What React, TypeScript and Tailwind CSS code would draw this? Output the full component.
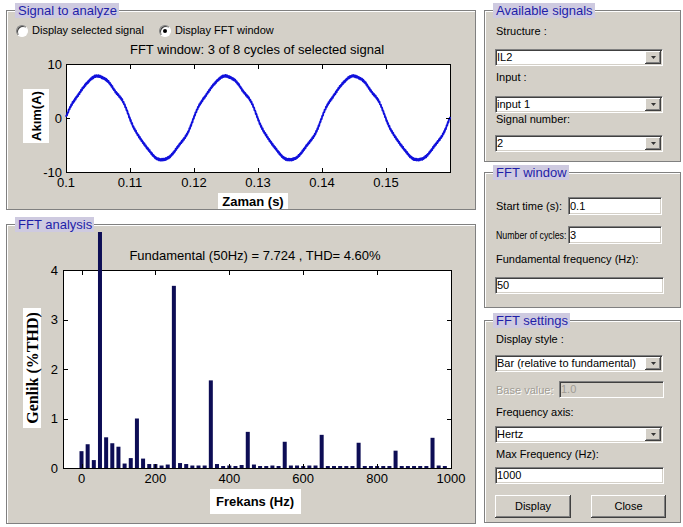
import React from 'react';

// Classic Windows / MATLAB GUI look: gray face, etched panels, sunken edit fields.
const SUNKEN =
  'border border-[#808080] border-b-white border-r-white shadow-[inset_1px_1px_0_#404040,inset_-1px_-1px_0_#d4d0c8]';
const RAISED = 'bg-[#d4d0c8] shadow-[inset_-1px_-1px_0_#404040,inset_1px_1px_0_#fff,inset_-2px_-2px_0_#808080]';

function Panel({ title, className, children }: { title: string; className: string; children?: React.ReactNode }) {
  return (
    <div className={`relative flex flex-col border border-[#808080] bg-[#d4d0c8] shadow-[inset_1px_1px_0_#fff] ${className}`}>
      <span className="absolute left-[8px] top-[-8px] z-10 h-[15px] bg-[#cecae0] pl-[3px] pr-[2px] text-[13px] leading-[15px] text-[#1e1ea8]">
        {title}
      </span>
      {children}
    </div>
  );
}

function Label({ children, className = '', disabled }: { children: React.ReactNode; className?: string; disabled?: boolean }) {
  return (
    <div
      className={`h-[12px] whitespace-nowrap leading-[12px] ${
        disabled ? 'text-[#a09c94] [text-shadow:1px_1px_0_#fff]' : ''
      } ${className}`}
    >
      {children}
    </div>
  );
}

function Combo({ value, className = '' }: { value: string; className?: string }) {
  return (
    <div className={`flex h-[17px] w-[168px] items-center bg-white ${SUNKEN} ${className}`}>
      <span className="flex-1 truncate pl-[1px] leading-[13px]">{value}</span>
      <span className={`mr-[1px] flex h-[13px] w-[16px] items-center justify-center ${RAISED}`}>
        <svg width="5" height="3" viewBox="0 0 5 3" aria-hidden="true">
          <path d="M0 0h5L2.5 3z" fill="#333" />
        </svg>
      </span>
    </div>
  );
}

function Edit({ value, className = '', disabled }: { value: string; className?: string; disabled?: boolean }) {
  return (
    <div
      className={`flex items-center ${SUNKEN} ${
        disabled ? 'bg-[#d4d0c8] text-[#a09c94]' : 'bg-white'
      } ${className}`}
    >
      <span className="pl-[1px] leading-[13px]">{value}</span>
    </div>
  );
}

function Radio({ checked, label, className = '' }: { checked?: boolean; label: string; className?: string }) {
  return (
    <div className={`flex items-center gap-[4px] ${className}`}>
      <span className="flex h-[12px] w-[12px] items-center justify-center rounded-full border border-[#808080] border-b-white border-r-white bg-white shadow-[inset_1px_1px_0_#404040]">
        {checked && <span className="h-[4px] w-[4px] rounded-full bg-black" />}
      </span>
      <span className="leading-[13px]">{label}</span>
    </div>
  );
}

/* ---------- signal plot ---------- */

const sigX = (t: number) => 66 + ((t - 0.1) / 0.06) * 384;
const sigY = (v: number) => 118 - v * 5.4;

const signalPath = (() => {
  const pts: string[] = [];
  const N = 1400;
  for (let i = 0; i <= N; i++) {
    const t = (i / N) * 0.06;
    const w = 2 * Math.PI * 50 * t;
    let v =
      7.7 * Math.sin(w) +
      0.08 * Math.sin(3 * w + 0.4) +
      0.22 * Math.sin(5 * w + 0.2) +
      0.12 * Math.sin(7 * w + 0.3) +
      0.06 * Math.sin(9 * w + 1.2);
    // switching ripple makes the trace look thick
    v += 0.14 * Math.sin(2 * Math.PI * 5150 * t) + 0.07 * Math.sin(2 * Math.PI * 9800 * t + 1);
    pts.push(`${i ? 'L' : 'M'}${sigX(0.1 + t).toFixed(2)} ${sigY(v).toFixed(2)}`);
  }
  return pts.join('');
})();

function SignalPlot() {
  const xt = [0.1, 0.11, 0.12, 0.13, 0.14, 0.15];
  return (
    <svg width="468" height="172" viewBox="7 37 468 172" className="block" fontSize={13}>
      <text x="257" y="54" textAnchor="middle">
        FFT window: 3 of 8 cycles of selected signal
      </text>
      <rect x="66.5" y="64.5" width="384" height="108" fill="#fff" stroke="#000" />
      <path d={signalPath} fill="none" stroke="#1010dc" strokeWidth="1.9" strokeLinejoin="round" />
      {[...xt, 0.16].map((t) => {
        const x = Math.round(sigX(t)) + 0.5;
        return (
          <g key={t} stroke="#000">
            <line x1={x} x2={x} y1={172} y2={168} />
            <line x1={x} x2={x} y1={65} y2={69} />
          </g>
        );
      })}
      {[-10, 0, 10].map((v) => (
        <g key={v} stroke="#000">
          <line x1={66} x2={70} y1={sigY(v) + 0.5} y2={sigY(v) + 0.5} />
          <line x1={446} x2={450} y1={sigY(v) + 0.5} y2={sigY(v) + 0.5} />
        </g>
      ))}
      {xt.map((t) => (
        <text key={t} x={sigX(t)} y="187" textAnchor="middle">
          {t}
        </text>
      ))}
      <text x="62" y="69" textAnchor="end">10</text>
      <text x="62" y="123" textAnchor="end">0</text>
      <text x="62" y="177" textAnchor="end">-10</text>
      <rect x="218" y="193" width="70" height="16" fill="#fff" />
      <text x="253" y="206" textAnchor="middle" fontWeight="bold">
        Zaman (s)
      </text>
      <rect x="23" y="89" width="26" height="54" fill="#fff" />
      <text transform="translate(41 116) rotate(-90)" textAnchor="middle" fontWeight="bold">
        Akım(A)
      </text>
    </svg>
  );
}

/* ---------- FFT bar chart ---------- */

const fx = (f: number) => 81.5 + 0.3695 * f;
const fy = (v: number) => 468 - 49.5 * v;

// magnitude of each 16.67 Hz bin, % of fundamental
const BARS = [
  0.34, 0.48, 0.16, 4.77, 0.62, 0.5, 0.43, 0.09, 0.2, 1.0, 0.19, 0.08, 0.08, 0.05, 0.07, 3.68, 0.1, 0.08, 0.05,
  0.05, 0.05, 1.77, 0.08, 0.04, 0.05, 0.04, 0.06, 0.73, 0.07, 0.04, 0.04, 0.05, 0.04, 0.53, 0.05, 0.05, 0.04,
  0.05, 0.05, 0.67, 0.04, 0.04, 0.04, 0.04, 0.04, 0.51, 0.04, 0.04, 0.04, 0.04, 0.04, 0.35, 0.04, 0.04, 0.04,
  0.04, 0.04, 0.61, 0.05, 0.04,
];

function FftPlot() {
  const xt = [0, 200, 400, 600, 800, 1000];
  return (
    <svg width="468" height="298" viewBox="7 225 468 298" className="block" fontSize={13}>
      <text x="255" y="260" textAnchor="middle">
        Fundamental (50Hz) = 7.724 , THD= 4.60%
      </text>
      <rect x="63.5" y="270.5" width="388" height="198" fill="#fff" stroke="#000" />
      {BARS.map((v, k) => {
        const cx = fx((k * 50) / 3);
        const top = Math.max(232, fy(v));
        return <rect key={k} x={cx - 2} y={top} width="4" height={468 - top} fill="#0d0d55" />;
      })}
      {xt.map((f) => {
        const x = Math.round(fx(f)) + 0.5;
        return (
          <g key={f} stroke="#000">
            <line x1={x} x2={x} y1={468} y2={464} />
            <line x1={x} x2={x} y1={271} y2={275} />
          </g>
        );
      })}
      {[0, 1, 2, 3, 4].map((v) => {
        const y = Math.round(fy(v)) + 0.5;
        return (
          <g key={v}>
            <line x1={64} x2={68} y1={y} y2={y} stroke="#000" />
            <line x1={447} x2={451} y1={y} y2={y} stroke="#000" />
            <text x="58" y={fy(v) + 4.5} textAnchor="end">
              {v}
            </text>
          </g>
        );
      })}
      <line x1="63" x2="452" y1="468.5" y2="468.5" stroke="#000" />
      {xt.map((f) => (
        <text key={f} x={fx(f)} y="483" textAnchor="middle">
          {f}
        </text>
      ))}
      <rect x="210" y="489" width="91" height="25" fill="#fff" />
      <text x="255" y="506" textAnchor="middle" fontWeight="bold">
        Frekans (Hz)
      </text>
      <rect x="23" y="308" width="18" height="120" fill="#fff" />
      <text
        transform="translate(37.5 368) rotate(-90)"
        textAnchor="middle"
        fontWeight="bold"
        fontSize={16}
        fontFamily="'Liberation Serif', 'Times New Roman', serif"
      >
        Genlik (%THD)
      </text>
    </svg>
  );
}

export default function App() {
  return (
    <div className="flex h-[527px] w-[683px] overflow-hidden bg-white font-['Liberation_Sans',Arial,sans-serif] text-[11px] text-black">
      {/* left column: signal + FFT analysis */}
      <div className="flex w-[476px] shrink-0 flex-col pl-[6px] pt-[10px]">
        <Panel title="Signal to analyze" className="h-[200px]">
          <div className="ml-[9px] mt-[13px] flex h-[13px] items-center">
            <Radio label="Display selected signal" />
            <Radio checked label="Display FFT window" className="ml-[15px]" />
          </div>
          <SignalPlot />
        </Panel>
        <Panel title="FFT analysis" className="mt-[14px] h-[300px]">
          <FftPlot />
        </Panel>
      </div>

      {/* right column: controls */}
      <div className="ml-[8px] flex w-[197px] shrink-0 flex-col pt-[10px]">
        <Panel title="Available signals" className="h-[152px] pl-[10px]">
          <Label className="ml-[1px] mt-[14px]">Structure :</Label>
          <Combo value="IL2" className="mt-[12px]" />
          <Label className="ml-[1px] mt-[5px]">Input :</Label>
          <Combo value="input 1" className="mt-[13px]" />
          <Label className="ml-[1px]">Signal number:</Label>
          <Combo value="2" className="mt-[10px]" />
        </Panel>

        <Panel title="FFT window" className="mt-[10px] h-[136px] pl-[10px]">
          <div className="mt-[24px] flex h-[18px] items-center">
            <Label className="ml-[1px] w-[72px]">Start time (s):</Label>
            <Edit value="0.1" className="h-[18px] w-[94px]" />
          </div>
          <div className="mt-[11px] flex h-[18px] items-center">
            <Label className="ml-[1px] w-[72px]">
              <span className="inline-block origin-left scale-x-[0.8]">Number of cycles:</span>
            </Label>
            <Edit value="3" className="h-[18px] w-[94px]" />
          </div>
          <Label className="ml-[1px] mt-[9px]">Fundamental frequency (Hz):</Label>
          <Edit value="50" className="mt-[12px] h-[17px] w-[169px]" />
        </Panel>

        <Panel title="FFT settings" className="mt-[12px] h-[203px] pl-[10px]">
          <Label className="ml-[1px] mt-[12px]">Display style :</Label>
          <Combo value="Bar (relative to fundamental)" className="mt-[10px]" />
          <div className="mt-[9px] flex h-[17px] items-center">
            <Label disabled className="ml-[1px] w-[63px]">
              Base value:
            </Label>
            <Edit disabled value="1.0" className="h-[17px] w-[105px]" />
          </div>
          <Label className="ml-[1px] mt-[8px]">Frequency axis:</Label>
          <Combo value="Hertz" className="mt-[8px]" />
          <Label className="ml-[1px] mt-[5px]">Max Frequency (Hz):</Label>
          <Edit value="1000" className="mt-[7px] h-[17px] w-[169px]" />
          <div className="mt-[11px] flex gap-[20px]">
            <div className={`flex h-[23px] w-[76px] items-center justify-center ${RAISED}`}>Display</div>
            <div className={`flex h-[23px] w-[75px] items-center justify-center ${RAISED}`}>Close</div>
          </div>
        </Panel>
      </div>
    </div>
  );
}
